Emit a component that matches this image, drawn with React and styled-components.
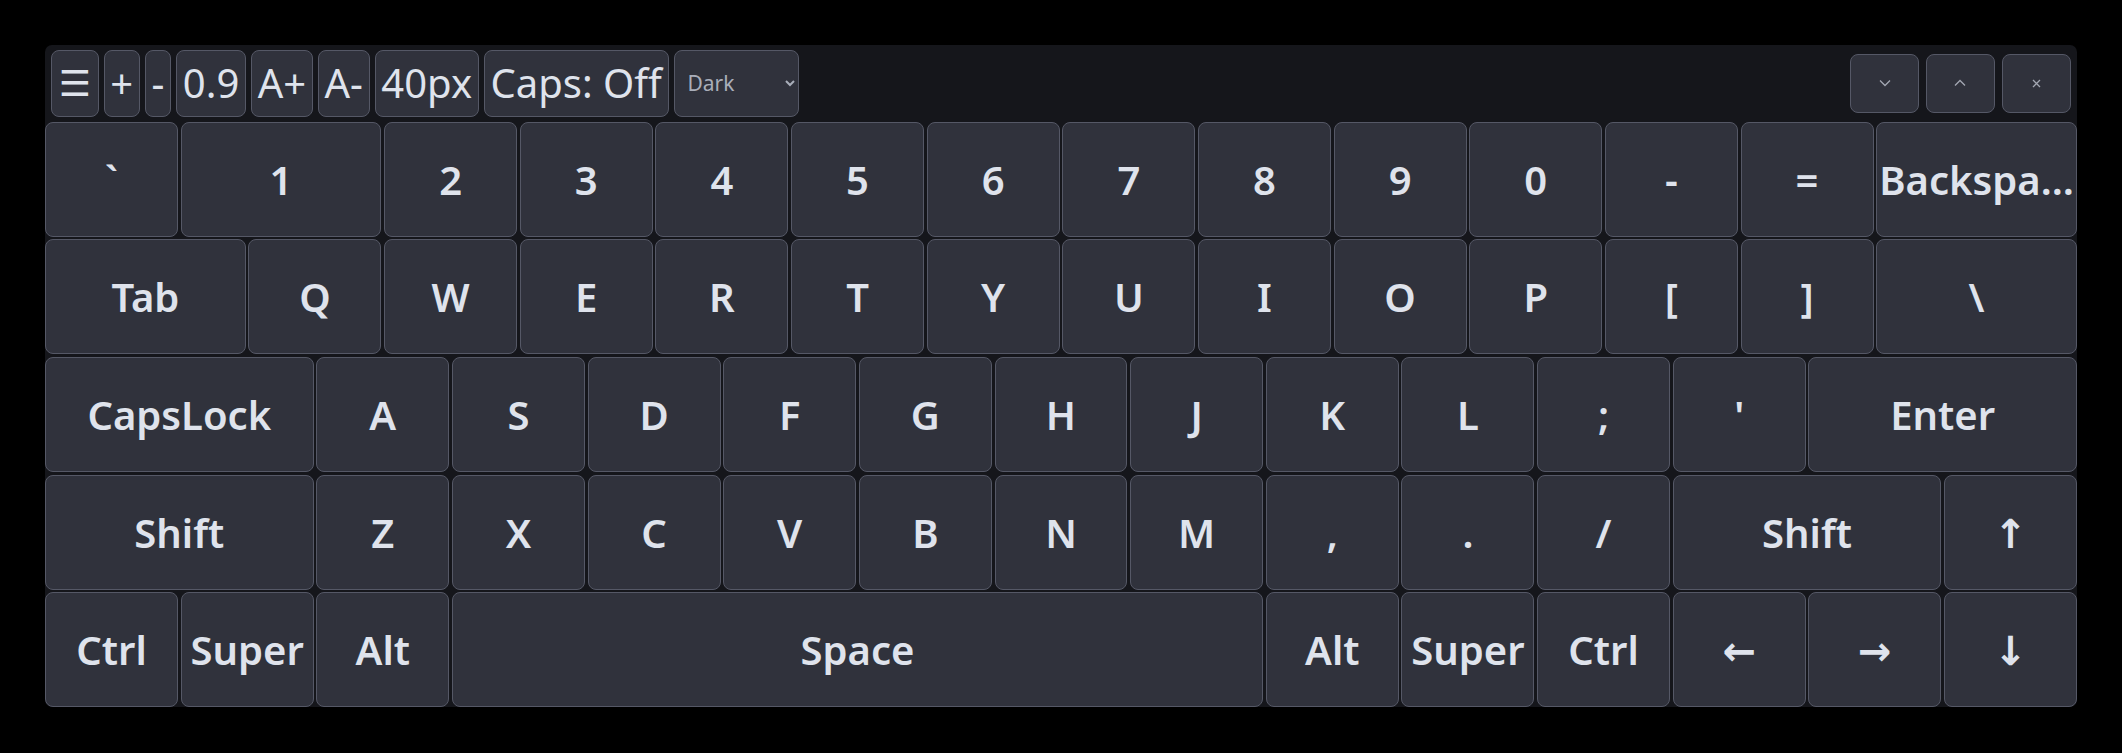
import styled, { createGlobalStyle } from "styled-components";

const GlobalStyle = createGlobalStyle`
  html, body {
    margin: 0;
    padding: 0;
    background: #000;
  }
  * {
    box-sizing: border-box;
  }
`;

const Page = styled.div`
  padding: 45px;
  font-family: "Noto Sans", "DejaVu Sans", sans-serif;
`;

const Board = styled.div`
  display: flex;
  flex-direction: column;
  width: 100%;
  background: #15161b;
  border-radius: 7px;
  user-select: none;
`;

const Toolbar = styled.div`
  display: flex;
  align-items: center;
  gap: 5px;
  height: 76.6px;
  padding: 0 6px;
`;

const ToolButton = styled.button`
  height: 67.4px;
  padding: 0 5.7px;
  background: #30323c;
  border: 1px solid #555866;
  border-radius: 8px;
  color: #dfe3ec;
  font-family: "Noto Sans", "DejaVu Sans", sans-serif;
  font-size: ${(p) => (p.$icon ? "36px" : "40px")};
  font-weight: 400;
  line-height: 1;
  white-space: nowrap;
  min-width: ${(p) => p.$min || "auto"};
`;

const ThemeSelect = styled.select`
  height: 67.4px;
  width: 125px;
  padding: 0 6px 0 9px;
  background: #30323c;
  border: 1px solid #555866;
  border-radius: 8px;
  color: #a9aeba;
  font-family: "Noto Sans", "DejaVu Sans", sans-serif;
  font-size: 21px;
`;

const WindowControls = styled.div`
  display: flex;
  gap: 6.6px;
  margin-left: auto;
`;

const WinButton = styled.button`
  display: flex;
  align-items: center;
  justify-content: center;
  width: 69.3px;
  height: 59.3px;
  padding: 0;
  background: #30323c;
  border: 1px solid #555866;
  border-radius: 8px;
  color: #a3a7b2;
`;

const Keys = styled.div`
  display: grid;
  grid-template-columns: repeat(30, 1fr);
  grid-auto-rows: 115px;
  gap: 2.67px;
`;

const Key = styled.button`
  grid-column: span ${(p) => p.$span};
  padding: 0 2px;
  background: #30323c;
  border: 1px solid #555866;
  border-radius: 8px;
  color: #dfe3ec;
  font-family: "Noto Sans", "DejaVu Sans", sans-serif;
  font-size: 40px;
  font-weight: 600;
  line-height: 113px;
  text-align: center;
  white-space: nowrap;
  overflow: hidden;
  text-overflow: ellipsis;
`;

const Chevron = ({ dir }) => (
  <svg width="12" height="8" viewBox="0 0 12 8" fill="none">
    <path
      d={dir === "down" ? "M1 1.5 L6 6.5 L11 1.5" : "M1 6.5 L6 1.5 L11 6.5"}
      stroke="currentColor"
      strokeWidth="1.3"
    />
  </svg>
);

const Cross = () => (
  <svg width="9" height="9" viewBox="0 0 9 9" fill="none">
    <path d="M1 1 L8 8 M8 1 L1 8" stroke="currentColor" strokeWidth="1.3" />
  </svg>
);

const rows = [
  [["`", 1], ["1", 1.5], "2", "3", "4", "5", "6", "7", "8", "9", "0", "-", "=", ["Backspace", 1.5]],
  [["Tab", 1.5], "Q", "W", "E", "R", "T", "Y", "U", "I", "O", "P", "[", "]", ["\\", 1.5]],
  [["CapsLock", 2], "A", "S", "D", "F", "G", "H", "J", "K", "L", ";", "'", ["Enter", 2]],
  [["Shift", 2], "Z", "X", "C", "V", "B", "N", "M", ",", ".", "/", ["Shift", 2], "↑"],
  ["Ctrl", "Super", "Alt", ["Space", 6], "Alt", "Super", "Ctrl", "←", "→", "↓"],
];

const App = () => {
  return (
    <Page>
      <GlobalStyle />
      <Board>
        <Toolbar>
          <ToolButton $icon $min="47.6px">☰</ToolButton>
          <ToolButton>+</ToolButton>
          <ToolButton>-</ToolButton>
          <ToolButton>0.9</ToolButton>
          <ToolButton>A+</ToolButton>
          <ToolButton>A-</ToolButton>
          <ToolButton>40px</ToolButton>
          <ToolButton>Caps: Off</ToolButton>
          <ThemeSelect defaultValue="dark">
            <option value="dark">Dark</option>
            <option value="light">Light</option>
          </ThemeSelect>
          <WindowControls>
            <WinButton><Chevron dir="down" /></WinButton>
            <WinButton><Chevron dir="up" /></WinButton>
            <WinButton><Cross /></WinButton>
          </WindowControls>
        </Toolbar>
        <Keys>
          {rows.map((row, r) =>
            row.map((k, i) => {
              const [label, units] = Array.isArray(k) ? k : [k, 1];
              return (
                <Key key={`${r}-${i}`} $span={units * 2}>
                  {label}
                </Key>
              );
            })
          )}
        </Keys>
      </Board>
    </Page>
  );
};

export default App;
